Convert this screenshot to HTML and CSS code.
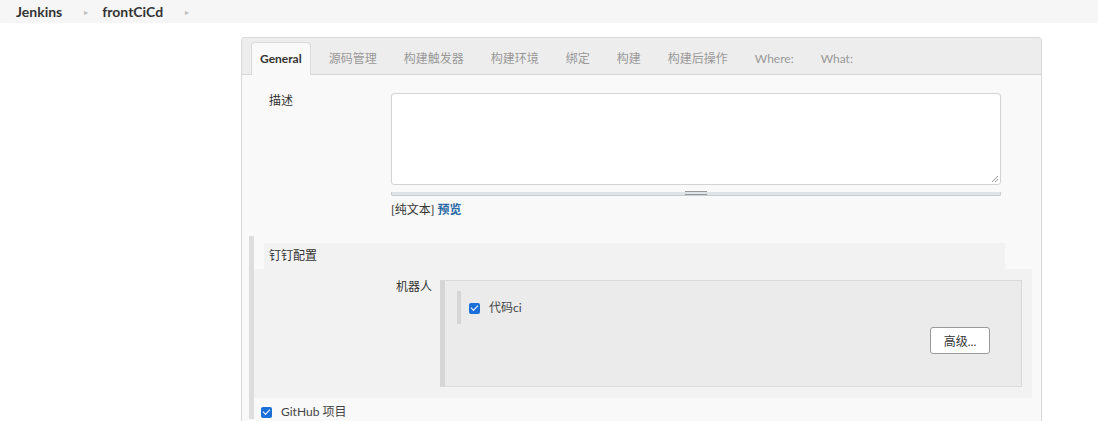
FILE: index.html
```html
<!DOCTYPE html>
<html lang="zh-CN">
<head>
    <meta charset="UTF-8">
    <title>frontCiCd Config [Jenkins]</title>
    <link rel="stylesheet" href="styles.css">
</head>
<body>
    <div class="breadcrumbs">
        <a class="crumb">Jenkins</a>
        <span class="crumb-arrow">&#9656;</span>
        <a class="crumb">frontCiCd</a>
        <span class="crumb-arrow">&#9656;</span>
    </div>

    <div class="config-panel">
        <div class="tab-bar">
            <div class="tab active">General</div>
            <div class="tab">源码管理</div>
            <div class="tab">构建触发器</div>
            <div class="tab">构建环境</div>
            <div class="tab">绑定</div>
            <div class="tab">构建</div>
            <div class="tab">构建后操作</div>
            <div class="tab">Where:</div>
            <div class="tab">What:</div>
        </div>

        <div class="config-body">
            <div class="form-row">
                <div class="form-label">描述</div>
                <div class="form-field">
                    <div class="textarea">
                        <svg class="resize" width="8" height="8" viewBox="0 0 8 8">
                            <path d="M1 7L7 1M4 7L7 4" stroke="#999" stroke-width="1"/>
                        </svg>
                    </div>
                    <div class="grip"><span class="grip-handle"></span></div>
                    <div class="preview-line">[纯文本] <a class="preview-link">预览</a></div>
                </div>
            </div>

            <div class="group">
                <div class="section">
                    <div class="section-header">钉钉配置</div>
                    <div class="section-body">
                        <div class="robot-label">机器人</div>
                        <div class="repeat-box">
                            <div class="repeat-item">
                                <div class="item-line">
                                    <span class="checkbox"></span>
                                    <span class="item-text">代码ci</span>
                                </div>
                            </div>
                            <div class="button-row">
                                <button class="btn">高级...</button>
                            </div>
                        </div>
                    </div>
                </div>
                <div class="check-row">
                    <span class="checkbox"></span>
                    <span class="item-text">GitHub 项目</span>
                </div>
            </div>
        </div>
    </div>
</body>
</html>
```

FILE: styles.css
```css
body {
    margin: 0;
    background: #ffffff;
    font-family: Lato, "Noto Sans CJK SC", sans-serif;
    font-size: 12px;
    color: #333;
    overflow: hidden;
}
.breadcrumbs {
    height: 23px;
    background: #f6f6f6;
    display: flex;
    align-items: center;
    padding-left: 16px;
}
.crumb {
    font-weight: bold;
    font-size: 14px;
    color: #333;
}
.crumb-arrow {
    font-size: 8px;
    color: #bbb;
    margin: 0 14px 0 22px;
}
.config-panel {
    margin: 14px 0 0 241px;
    width: 799px;
    border: 1px solid #d8d8d8;
    border-radius: 3px 3px 0 0;
    background: #f9f9f9;
    height: 400px;
}
.tab-bar {
    height: 36px;
    background: #ededed;
    border-bottom: 1px solid #d6d6d6;
    display: flex;
    align-items: flex-end;
    gap: 9px;
    padding-left: 9px;
}
.tab {
    height: 32px;
    line-height: 32px;
    padding: 0 9px;
    color: #999;
    margin-bottom: -1px;
}
.tab.active {
    background: #f9f9f9;
    color: #333;
    font-weight: bold;
    border: 1px solid #dadada;
    border-bottom: none;
    border-radius: 4px 4px 0 0;
    height: 32px;
    padding: 0 8px;
}
.config-body {
    padding-top: 18px;
}
.form-row {
    display: flex;
}
.form-label {
    width: 122px;
    padding-left: 27px;
    line-height: 16px;
}
.form-field {
    width: 610px;
}
.textarea {
    height: 90px;
    background: #fff;
    border: 1px solid #d4d4d4;
    border-radius: 3px;
    position: relative;
}
.resize {
    position: absolute;
    right: 1px;
    bottom: 1px;
}
.grip {
    margin-top: 7px;
    height: 3px;
    background: #dfe4e9;
    border: 1px solid #c8cdd3;
    border-top: none;
    border-radius: 0 0 2px 2px;
    display: flex;
    justify-content: center;
}
.grip-handle {
    width: 22px;
    height: 2px;
    border-top: 1px solid #999;
    border-bottom: 1px solid #999;
    margin-top: -1px;
}
.preview-line {
    margin-top: 6px;
    line-height: 16px;
}
.preview-link {
    color: #2b6aa5;
    font-weight: bold;
}
.group {
    margin: 18px 0 0 7px;
    border-left: 5px solid #dddddd;
    padding-top: 7px;
}
.section-header {
    width: 741px;
    margin-left: 10px;
    height: 26px;
    line-height: 26px;
    background: #f2f2f2;
    padding-left: 5px;
    box-sizing: border-box;
}
.section-body {
    width: 778px;
    height: 129px;
    background: #f2f2f2;
    display: flex;
    padding-top: 11px;
    box-sizing: border-box;
}
.robot-label {
    width: 178px;
    text-align: right;
    line-height: 14px;
}
.repeat-box {
    margin-left: 8px;
    width: 582px;
    height: 107px;
    box-sizing: border-box;
    border: 1px solid #dadada;
    border-left: 5px solid #d6d6d6;
    background: #ebebeb;
    padding: 10px 0 0 12px;
}
.repeat-item {
    border-left: 4px solid #d6d6d6;
    height: 33px;
    padding: 10px 0 0 8px;
    box-sizing: border-box;
}
.item-line {
    display: flex;
    align-items: center;
    gap: 9px;
}
.checkbox {
    width: 11px;
    height: 11px;
    background: #1a6fd8;
    border-radius: 2px;
    display: inline-block;
    position: relative;
}
.checkbox::after {
    content: "";
    position: absolute;
    left: 2px;
    top: 2px;
    width: 6px;
    height: 3px;
    border-left: 1.6px solid #fff;
    border-bottom: 1.6px solid #fff;
    transform: rotate(-45deg);
}
.item-text {
    color: #444;
    line-height: 14px;
}
.button-row {
    display: flex;
    justify-content: flex-end;
    padding-right: 31px;
    margin-top: 3px;
}
.btn {
    width: 60px;
    height: 27px;
    background: #fff;
    border: 1px solid #999;
    border-radius: 3px;
    font-family: Lato, "Noto Sans CJK SC", sans-serif;
    font-size: 12px;
    color: #333;
    padding: 0;
}
.check-row {
    display: flex;
    align-items: center;
    gap: 9px;
    padding: 7px 0 0 7px;
}
```
